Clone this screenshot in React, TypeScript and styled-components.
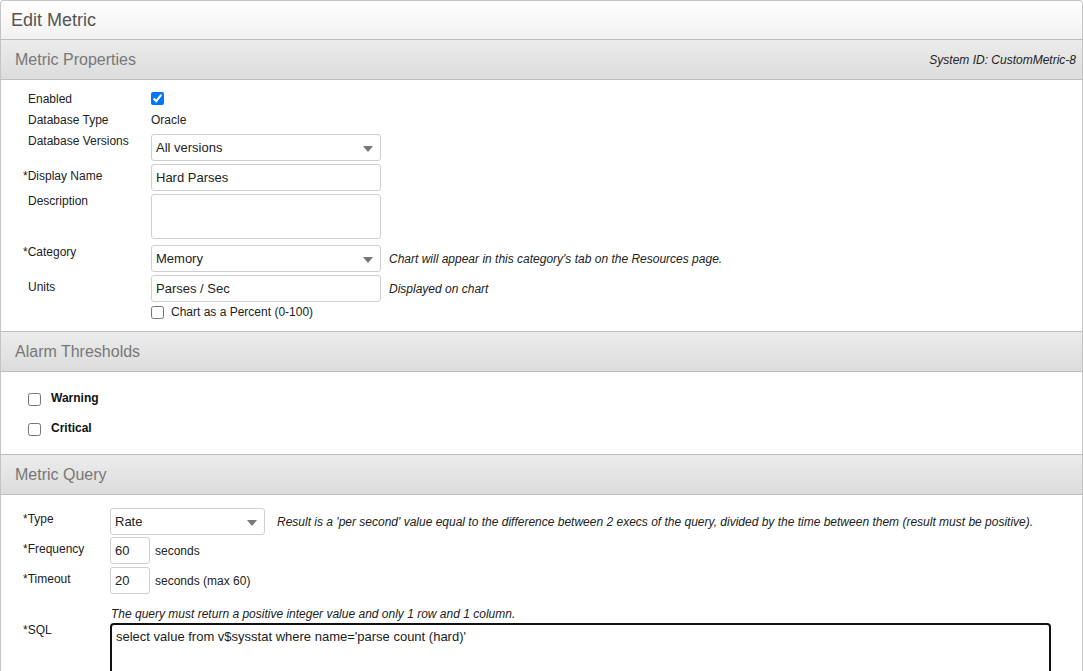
import React from 'react'
import styled, { createGlobalStyle } from 'styled-components'

const GlobalStyle = createGlobalStyle`
     html, body {
          margin: 0;
          padding: 0;
          background: #ffffff;
     }
     body {
          font-family: "Liberation Sans", Arial, sans-serif;
          font-size: 12px;
          color: #222;
     }
     * {
          box-sizing: border-box;
     }
`

export default function App() {
     return (
          <>
               <GlobalStyle />
               <Page>
                    <TitleBar>Edit Metric</TitleBar>

                    <SectionHeader>
                         <SectionTitle>Metric Properties</SectionTitle>
                         <SystemId>System ID: CustomMetric-8</SystemId>
                    </SectionHeader>
                    <PropsBody>
                         <Row $mt={12}>
                              <Label $w={129}>Enabled</Label>
                              <Check type="checkbox" defaultChecked />
                         </Row>
                         <Row $mt={7}>
                              <Label $w={129}>Database Type</Label>
                              <PlainValue>Oracle</PlainValue>
                         </Row>
                         <Row $mt={7}>
                              <Label $w={129}>Database Versions</Label>
                              <SelectWrap $w={230}>
                                   <Select defaultValue="all">
                                        <option value="all">All versions</option>
                                   </Select>
                              </SelectWrap>
                         </Row>
                         <Row $mt={3}>
                              <Label $w={129} $pt={5}><Req>*</Req>Display Name</Label>
                              <TextInput $w={230} defaultValue="Hard Parses" />
                         </Row>
                         <Row $mt={3}>
                              <Label $w={129}>Description</Label>
                              <TextArea $w={230} $h={45} />
                         </Row>
                         <Row $mt={6} $center>
                              <Label $w={129}><Req>*</Req>Category</Label>
                              <SelectWrap $w={230}>
                                   <Select defaultValue="memory">
                                        <option value="memory">Memory</option>
                                   </Select>
                              </SelectWrap>
                              <Help>Chart will appear in this category's tab on the Resources page.</Help>
                         </Row>
                         <Row $mt={3} $center>
                              <Label $w={129} $pt={5}>Units</Label>
                              <TextInput $w={230} defaultValue="Parses / Sec" />
                              <Help>Displayed on chart</Help>
                         </Row>
                         <Row $mt={4}>
                              <Label $w={129} />
                              <CheckLabel>
                                   <Check type="checkbox" />
                                   <span>Chart as a Percent (0-100)</span>
                              </CheckLabel>
                         </Row>
                    </PropsBody>

                    <SectionHeader>
                         <SectionTitle>Alarm Thresholds</SectionTitle>
                    </SectionHeader>
                    <AlarmBody>
                         <AlarmRow>
                              <Check type="checkbox" />
                              <AlarmName>Warning</AlarmName>
                         </AlarmRow>
                         <AlarmRow $mt={17}>
                              <Check type="checkbox" />
                              <AlarmName>Critical</AlarmName>
                         </AlarmRow>
                    </AlarmBody>

                    <SectionHeader>
                         <SectionTitle>Metric Query</SectionTitle>
                    </SectionHeader>
                    <QueryBody>
                         <Row $mt={13} $center>
                              <Label $w={88} $pt={4}><Req>*</Req>Type</Label>
                              <SelectWrap $w={155}>
                                   <Select defaultValue="rate">
                                        <option value="rate">Rate</option>
                                   </Select>
                              </SelectWrap>
                              <Help $ml={12}>
                                   Result is a 'per second' value equal to the difference between 2 execs of the query, divided by the time between them (result must be positive).
                              </Help>
                         </Row>
                         <Row $mt={2} $center>
                              <Label $w={88} $pt={5}><Req>*</Req>Frequency</Label>
                              <TextInput $w={40} defaultValue="60" />
                              <Unit>seconds</Unit>
                         </Row>
                         <Row $mt={3} $center>
                              <Label $w={88} $pt={5}><Req>*</Req>Timeout</Label>
                              <TextInput $w={40} defaultValue="20" />
                              <Unit>seconds (max 60)</Unit>
                         </Row>
                         <Row $mt={13}>
                              <Label $w={88} />
                              <Hint>The query must return a positive integer value and only 1 row and 1 column.</Hint>
                         </Row>
                         <Row $mt={2}>
                              <Label $w={88}><Req>*</Req>SQL</Label>
                              <SqlBox defaultValue="select value from v$sysstat where name='parse count (hard)'" />
                         </Row>
                    </QueryBody>
               </Page>
          </>
     );
}

const Page = styled.div`
     width: 1083px;
     height: 671px;
     overflow: hidden;
     border: 1px solid #c4c4c4;
     border-bottom: none;
     border-radius: 4px 4px 0 0;
     background: #ffffff;
`

const TitleBar = styled.div`
     height: 38px;
     padding-left: 10px;
     display: flex;
     align-items: center;
     font-size: 18px;
     color: #555;
     background: linear-gradient(to bottom, #ffffff 0%, #f1f1f1 100%);
     border-radius: 4px 4px 0 0;
`

const SectionHeader = styled.div`
     height: 41px;
     display: flex;
     align-items: center;
     justify-content: space-between;
     padding: 0 6px 0 14px;
     border-top: 1px solid #bdbdbd;
     border-bottom: 1px solid #bdbdbd;
     background: linear-gradient(to bottom, #ececec 0%, #dcdcdc 100%);
`

const SectionTitle = styled.span`
     font-size: 16px;
     color: #777;
`

const SystemId = styled.span`
     font-size: 12px;
     font-style: italic;
     color: #222;
`

const PropsBody = styled.div`
     height: 251px;
     padding: 0 0 0 21px;
     display: flex;
     flex-direction: column;
`

const AlarmBody = styled.div`
     height: 82px;
     padding: 21px 0 0 27px;
     display: flex;
     flex-direction: column;
`

const QueryBody = styled.div`
     padding: 0 0 0 21px;
     display: flex;
     flex-direction: column;
`

const Row = styled.div<{ $mt?: number; $center?: boolean }>`
     display: flex;
     align-items: ${p => (p.$center ? 'center' : 'flex-start')};
     margin-top: ${p => p.$mt ?? 0}px;
`

const Label = styled.div<{ $w: number; $pt?: number }>`
     flex: 0 0 ${p => p.$w}px;
     padding-left: 6px;
     padding-top: ${p => p.$pt ?? 0}px;
     line-height: 14px;
     color: #222;
     align-self: flex-start;
`

const Req = styled.span`
     margin-left: -5px;
`

const PlainValue = styled.div`
     line-height: 14px;
     color: #222;
`

const Check = styled.input`
     width: 13px;
     height: 13px;
     margin: 0;
     flex: 0 0 auto;
`

const CheckLabel = styled.label`
     display: flex;
     align-items: center;
     gap: 7px;
     line-height: 13px;
     color: #222;
`

const SelectWrap = styled.div<{ $w: number }>`
     position: relative;
     width: ${p => p.$w}px;
     height: 27px;
     flex: 0 0 auto;

     &::after {
          content: "";
          position: absolute;
          right: 8px;
          top: 12px;
          border-left: 5px solid transparent;
          border-right: 5px solid transparent;
          border-top: 6px solid #777;
          pointer-events: none;
     }
`

const Select = styled.select`
     appearance: none;
     -webkit-appearance: none;
     width: 100%;
     height: 100%;
     margin: 0;
     padding: 0 20px 0 4px;
     border: 1px solid #cfcfcf;
     border-radius: 3px;
     background: #fff;
     font-family: "Liberation Sans", Arial, sans-serif;
     font-size: 13px;
     color: #222;
     outline: none;
`

const TextInput = styled.input<{ $w: number }>`
     width: ${p => p.$w}px;
     height: 27px;
     flex: 0 0 auto;
     margin: 0;
     padding: 0 4px;
     border: 1px solid #cfcfcf;
     border-radius: 3px;
     font-family: "Liberation Sans", Arial, sans-serif;
     font-size: 13px;
     color: #222;
     outline: none;
`

const TextArea = styled.textarea<{ $w: number; $h: number }>`
     width: ${p => p.$w}px;
     height: ${p => p.$h}px;
     margin: 0;
     padding: 4px;
     border: 1px solid #cfcfcf;
     border-radius: 3px;
     resize: none;
     font-family: "Liberation Sans", Arial, sans-serif;
     font-size: 13px;
     outline: none;
`

const Help = styled.span<{ $ml?: number }>`
     margin-left: ${p => p.$ml ?? 8}px;
     font-style: italic;
     color: #222;
     white-space: nowrap;
`

const Unit = styled.span`
     margin-left: 5px;
     color: #222;
`

const Hint = styled.div`
     padding-left: 1px;
     line-height: 14px;
     font-style: italic;
     color: #222;
`

const SqlBox = styled.textarea`
     width: 941px;
     height: 120px;
     margin: 0;
     padding: 4px 4px;
     border: 2px solid #111;
     border-radius: 4px;
     resize: none;
     font-family: "Liberation Sans", Arial, sans-serif;
     font-size: 13px;
     line-height: 15px;
     color: #222;
     outline: none;
`

const AlarmRow = styled.label<{ $mt?: number }>`
     display: flex;
     align-items: center;
     margin-top: ${p => p.$mt ?? 0}px;
     height: 13px;
`

const AlarmName = styled.span`
     margin-left: 10px;
     margin-top: -3px;
     font-weight: bold;
     color: #111;
`
